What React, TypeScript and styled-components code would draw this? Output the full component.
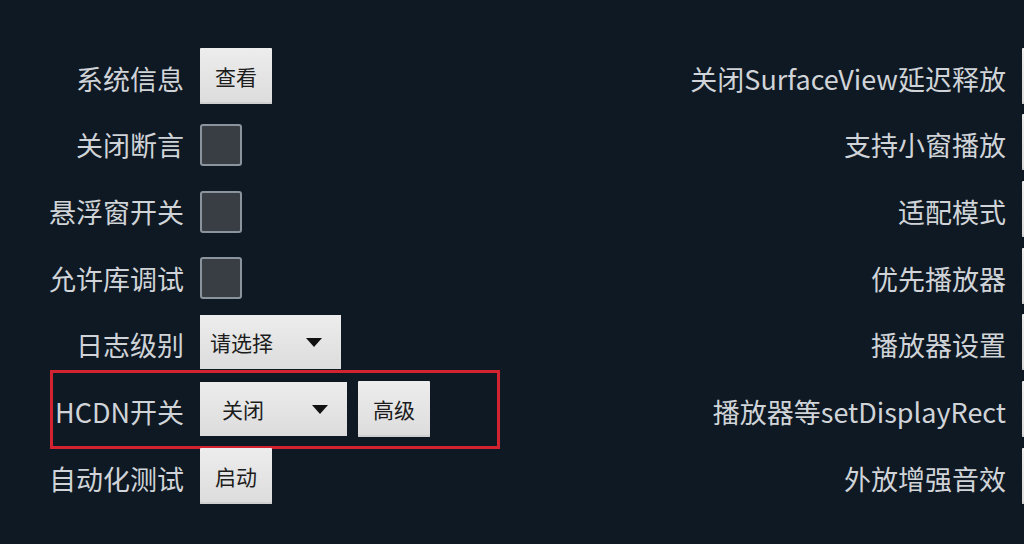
import React from 'react';
import styled, { createGlobalStyle } from 'styled-components';

const GlobalStyle = createGlobalStyle`
  html, body {
    margin: 0;
    padding: 0;
    background: #0f1923;
  }
  body {
    font-family: "Noto Sans CJK SC", "Noto Sans", sans-serif;
  }
`;

const Page = styled.div`
  width: 1024px;
  height: 544px;
  overflow: hidden;
  background: #0f1923;
  display: grid;
  grid-template-columns: 520px 1fr;
  padding-top: 45px;
  box-sizing: border-box;
`;

const LeftColumn = styled.div`
  display: flex;
  flex-direction: column;
`;

const RightColumn = styled.div`
  display: flex;
  flex-direction: column;
  margin-right: -70px;
`;

const Row = styled.div<{ $highlight?: boolean }>`
  position: relative;
  height: 66.67px;
  display: grid;
  grid-template-columns: 184px auto;
  column-gap: 16px;
  align-items: center;

  ${(p) =>
    p.$highlight &&
    `
    &::after {
      content: '';
      position: absolute;
      left: 50px;
      width: 450px;
      top: -8px;
      bottom: -4px;
      border: 3px solid #d42330;
      box-sizing: border-box;
      pointer-events: none;
    }
  `}
`;

const RightRow = styled.div`
  height: 66.67px;
  display: flex;
  justify-content: flex-end;
  align-items: center;
  gap: 16px;
`;

const Label = styled.span`
  justify-self: end;
  color: #d0d4d8;
  font-size: 27px;
  line-height: 1;
  white-space: nowrap;
`;

const Controls = styled.div`
  display: flex;
  align-items: center;
  gap: 11px;
  margin-top: -5px;
`;

const Button = styled.button`
  height: 56px;
  width: 72px;
  padding: 0;
  border: none;
  border-radius: 1px;
  background: linear-gradient(#ededed, #dcdcdc);
  box-shadow: inset 0 -2px 0 #cfcfcf;
  color: #1c1c1c;
  font-family: inherit;
  font-size: 21px;
  flex: none;
`;

const Select = styled.div<{ $width: number; $pad: number }>`
  height: 54px;
  width: ${(p) => p.$width}px;
  box-sizing: border-box;
  padding: 0 19px 0 ${(p) => p.$pad}px;
  display: flex;
  align-items: center;
  justify-content: space-between;
  background: linear-gradient(#ededed, #dcdcdc);
  color: #1c1c1c;
  font-size: 21px;
`;

const Arrow = styled.span`
  width: 0;
  height: 0;
  border-left: 8px solid transparent;
  border-right: 8px solid transparent;
  border-top: 9px solid #111;
`;

const Checkbox = styled.span`
  width: 42px;
  height: 42px;
  box-sizing: border-box;
  border: 2px solid #8b949c;
  border-radius: 3px;
  background: #393e44;
  margin-top: 5px;
`;

const leftRows = [
  { label: '系统信息', kind: 'button', text: '查看' },
  { label: '关闭断言', kind: 'check' },
  { label: '悬浮窗开关', kind: 'check' },
  { label: '允许库调试', kind: 'check' },
  { label: '日志级别', kind: 'select', text: '请选择', width: 141, pad: 10 },
  { label: 'HCDN开关', kind: 'hcdn' },
  { label: '自动化测试', kind: 'button', text: '启动' },
];

const rightRows = [
  '关闭SurfaceView延迟释放',
  '支持小窗播放',
  '适配模式',
  '优先播放器',
  '播放器设置',
  '播放器等setDisplayRect',
  '外放增强音效',
];

export default function App() {
  return (
    <>
      <GlobalStyle />
      <Page>
        <LeftColumn>
          {leftRows.map((r) => (
            <Row key={r.label} $highlight={r.kind === 'hcdn'}>
              <Label>{r.label}</Label>
              <Controls>
                {r.kind === 'button' && <Button>{r.text}</Button>}
                {r.kind === 'check' && <Checkbox />}
                {r.kind === 'select' && (
                  <Select $width={r.width!} $pad={r.pad!}>
                    {r.text}
                    <Arrow />
                  </Select>
                )}
                {r.kind === 'hcdn' && (
                  <>
                    <Select $width={147} $pad={22}>
                      关闭
                      <Arrow />
                    </Select>
                    <Button>高级</Button>
                  </>
                )}
              </Controls>
            </Row>
          ))}
        </LeftColumn>
        <RightColumn>
          {rightRows.map((t) => (
            <RightRow key={t}>
              <Label>{t}</Label>
              <Controls>
                <Button />
              </Controls>
            </RightRow>
          ))}
        </RightColumn>
      </Page>
    </>
  );
}
